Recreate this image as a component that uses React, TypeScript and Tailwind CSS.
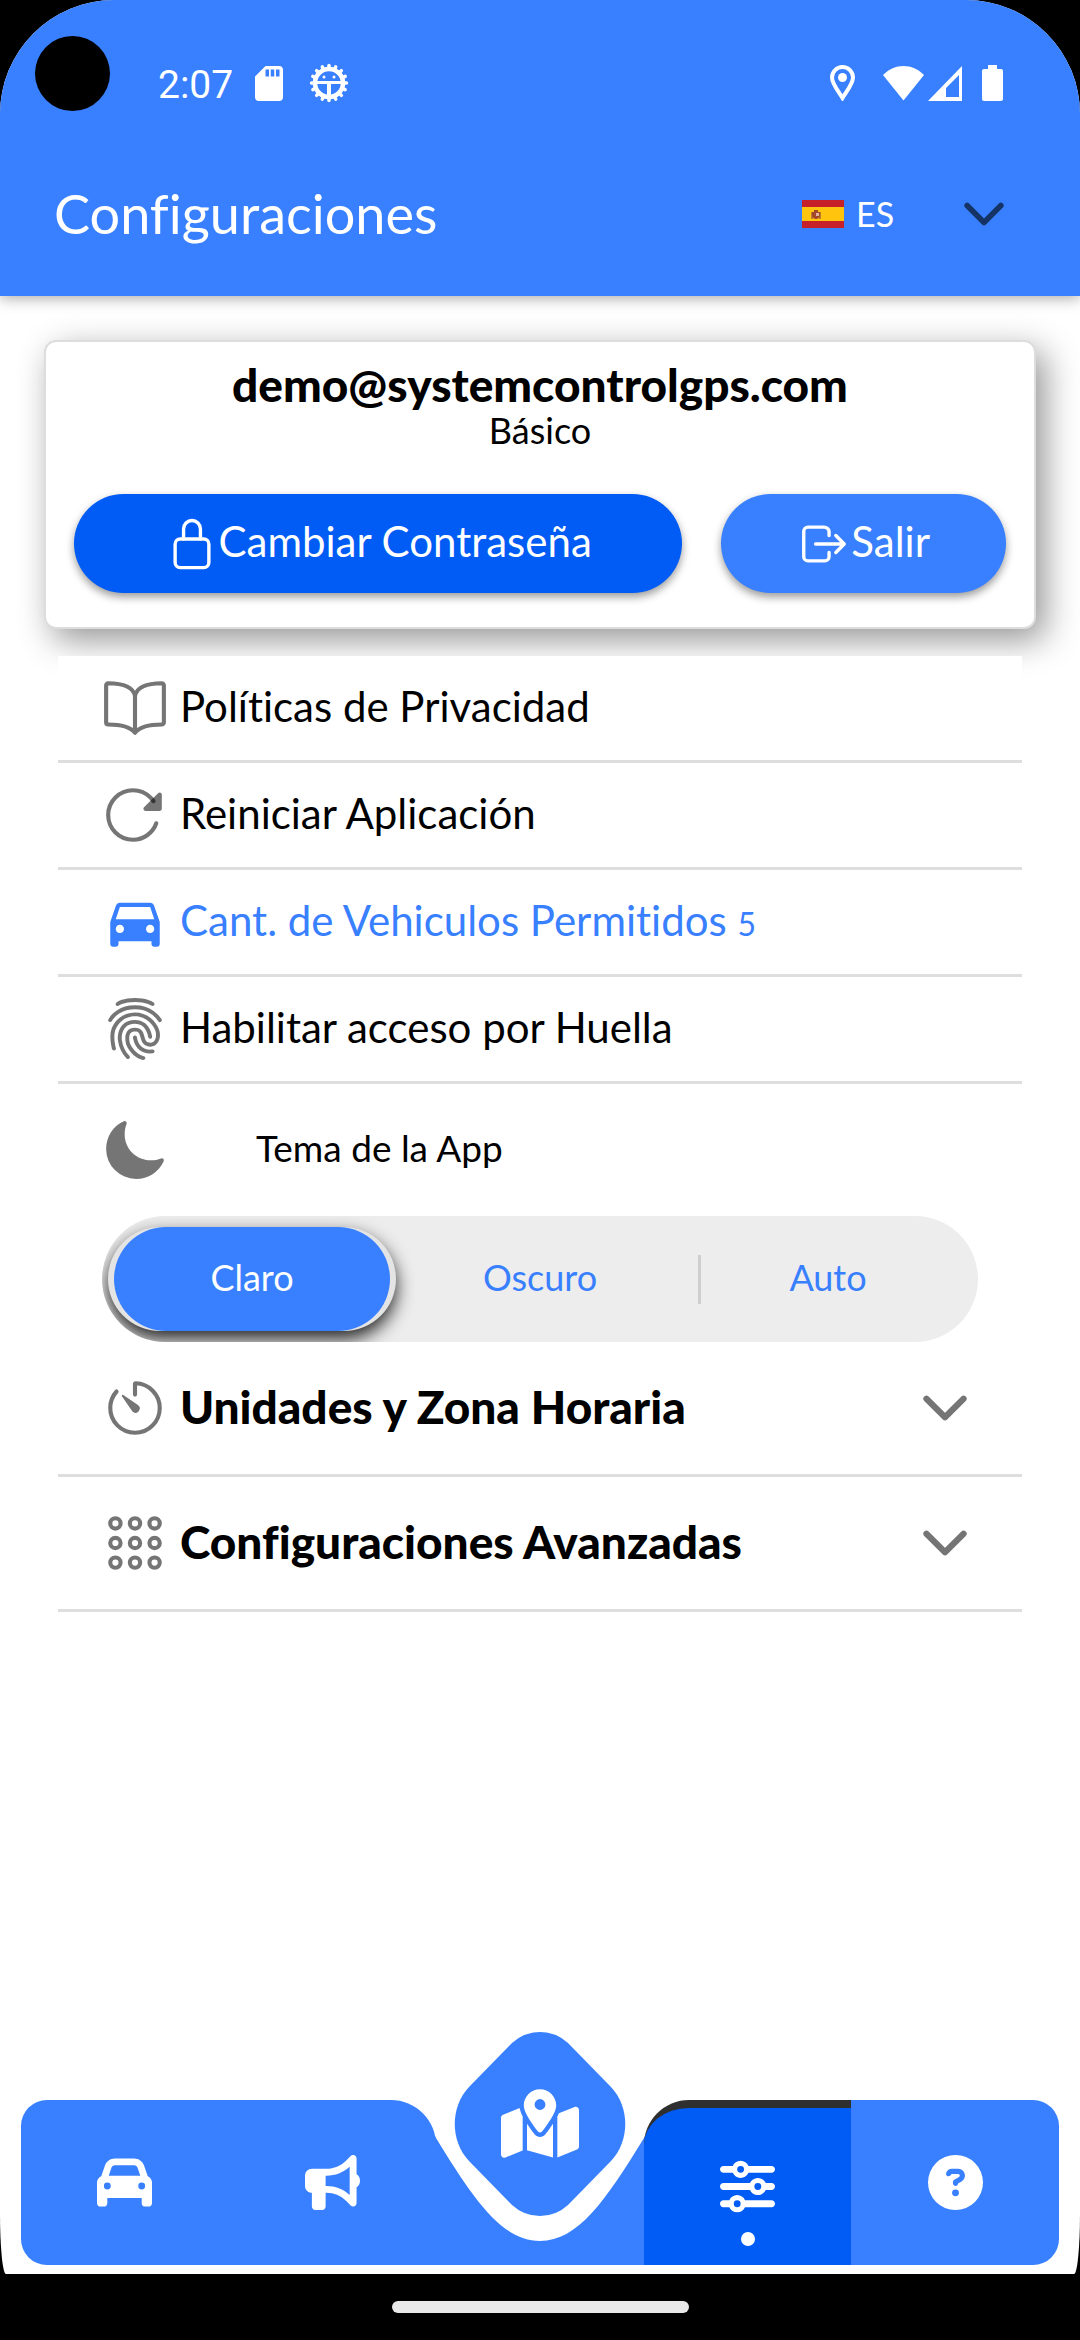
import { useState } from 'react';
import type { ReactNode } from 'react';
import {
    IoAppsOutline,
    IoBookOutline,
    IoChevronDown,
    IoFingerPrint,
    IoLockClosedOutline,
    IoLogOutOutline,
    IoMoon,
    IoReload,
    IoTimerOutline,
} from 'react-icons/io5';
import { MdDirectionsCar } from 'react-icons/md';
import { FaBullhorn, FaCar, FaCircleQuestion, FaMapLocationDot, FaSliders } from 'react-icons/fa6';

const THEMES = ['Claro', 'Oscuro', 'Auto'];

const TEETH = Array.from({ length: 16 }, (_, i) => (i * 360) / 16);

function StatusBar() {
    return (
        <div className="flex h-[166px] items-center pr-[77px] pl-[158px] text-white">
            {/* camera cutout */}
            <div className="absolute top-9 left-[35px] size-[75px] rounded-full bg-black"></div>

            <span className="pt-1 font-['Roboto',sans-serif] text-[39px] leading-none">2:07</span>
            <svg className="ml-[22px] h-[35px] w-7" viewBox="4 2 16 20" fill="currentColor">
                <path d="M18 2h-8L4 8v12c0 1.1.9 2 2 2h12c1.1 0 2-.9 2-2V4c0-1.1-.9-2-2-2zm-6 6h-2V4h2v4zm3 0h-2V4h2v4zm3 0h-2V4h2v4z" />
            </svg>
            <svg className="ml-[26px] size-10" viewBox="0 0 40 40" fill="none" stroke="currentColor">
                <circle cx="20" cy="20" r="14" strokeWidth="4.5" />
                {TEETH.map((a) => (
                    <path key={a} d="M20 5V2.500" strokeWidth="3.5" strokeLinecap="round" transform={`rotate(${a} 20 20)`} />
                ))}
                <path d="M6 19.500H34" strokeWidth="3" />
                <path d="M20 20V34" strokeWidth="4" />
                <circle cx="15" cy="14" r="1.5" fill="currentColor" stroke="none" />
                <circle cx="25" cy="14" r="1.5" fill="currentColor" stroke="none" />
            </svg>

            <div className="ml-auto flex items-center">
                <svg className="h-9 w-[25px]" viewBox="0 0 25 36" fill="none" stroke="currentColor" strokeWidth="4">
                    <path d="M12.500 33C9 27 2 19 2 12.500a10.500 10.500 0 0 1 21 0C23 19 16 27 12.500 33z" />
                    <circle cx="12.500" cy="12.500" r="4.500" fill="currentColor" stroke="none" />
                </svg>
                <svg className="ml-7 h-9 w-[41px]" viewBox="0 0 41 36" fill="currentColor">
                    <path d="M20.500 35.500 0 10C6 4 13 1 20.500 1S35 4 41 10z" />
                </svg>
                <svg className="ml-1 h-9 w-[34px]" viewBox="0 0 34 36" fill="currentColor" fillRule="evenodd">
                    <path d="M34 1V36H0zM31 10 18 23V32H31z" />
                </svg>
                <svg className="ml-5 h-9 w-[21px]" viewBox="0 0 21 36" fill="currentColor">
                    <path d="M6 0h9v4h4a2 2 0 0 1 2 2v28a2 2 0 0 1-2 2H2a2 2 0 0 1-2-2V6a2 2 0 0 1 2-2h4z" />
                </svg>
            </div>
        </div>
    );
}

function SpainFlag() {
    return (
        <svg className="h-7 w-[42px]" viewBox="0 0 42 28">
            <path fill="#c6202a" d="M0 0h42v28H0z" />
            <path fill="#ffc40d" d="M0 7h42v14H0z" />
            <path fill="#b9822a" d="M9 12h2v7H9zM17 12h2v7h-2z" />
            <path fill="#a3472a" d="M12 10h4v2h2v4q-1 3-4 3t-4-3v-4h2z" />
            <path fill="#e0b4a0" d="M14 13h3v3h-3z" />
        </svg>
    );
}

function Header() {
    return (
        <header className="z-10 bg-[#3880ff] shadow-[0_2px_14px_rgba(0,0,0,0.35)]">
            <StatusBar />
            <div className="flex h-24 items-center pr-[66px] pl-[54px] text-white">
                <h1 className="text-[54px] leading-none">Configuraciones</h1>
                <label className="ml-auto flex items-center gap-3">
                    <SpainFlag />
                    <select aria-label="Idioma" className="w-[86px] appearance-none bg-transparent text-[34px] leading-none outline-none">
                        <option>ES</option>
                    </select>
                    <IoChevronDown className="size-[60px] text-black/60" />
                </label>
            </div>
            <div className="h-[34px]"></div>
        </header>
    );
}

function AccountCard() {
    return (
        <section className="mx-11 mt-11 rounded-xl border-2 border-[#ddd] bg-white px-7 pt-[18px] pb-[34px] text-center text-black shadow-[9px_11px_34px_rgba(0,0,0,0.42)]">
            <h2 className="text-[46px] leading-[50px] font-black">demo@systemcontrolgps.com</h2>
            <p className="text-[36px] leading-10">Básico</p>
            <div className="mt-11 flex gap-[39px] text-[42px] text-white">
                <button className="flex h-[99px] flex-[609] items-center justify-center rounded-full bg-[#005cf5] shadow-[0_4px_8px_rgba(0,0,0,0.4)]">
                    <IoLockClosedOutline className="size-[54px]" />
                    <span className="pb-1">Cambiar Contraseña</span>
                </button>
                <button className="flex h-[99px] flex-[285] items-center justify-center rounded-full bg-[#3880ff] shadow-[0_4px_8px_rgba(0,0,0,0.4)]">
                    <IoLogOutOutline className="size-[54px]" />
                    <span className="pb-1">Salir</span>
                </button>
            </div>
        </section>
    );
}

interface RowProps {
    icon: ReactNode;
    children: ReactNode;
}

function Row({ icon, children }: RowProps) {
    return (
        <button className="flex h-[107px] w-full items-center gap-3 border-b-3 border-[#dedede] bg-white px-11 text-left text-[42px]">
            <span className="text-[66px] text-black/54">{icon}</span>
            <span className="pb-1">{children}</span>
        </button>
    );
}

function Expander({ icon, children }: RowProps) {
    return (
        <button className="flex h-[135px] w-full items-center gap-3 border-b-3 border-[#dedede] bg-white px-11 text-left text-[46px] font-black">
            <span className="text-[66px] text-black/54">{icon}</span>
            <span className="pb-1">{children}</span>
            <IoChevronDown className="ml-auto size-[66px] text-black/54" />
        </button>
    );
}

function ThemePicker() {
    const [theme, setTheme] = useState('Claro');

    return (
        <div role="radiogroup" aria-labelledby="theme-title">
            <div className="flex h-[132px] items-center px-11">
                <IoMoon className="size-[66px] text-black/54" />
                <p id="theme-title" className="pb-1 pl-[88px] text-[37px]">Tema de la App</p>
            </div>
            <div className="mx-11 grid h-[126px] grid-cols-3 overflow-hidden rounded-full bg-[#ededed] px-[6px] py-[11px] text-[36px]">
                {THEMES.map((t) => (
                    <label
                        key={t}
                        className={`relative flex cursor-pointer items-center justify-center rounded-full ${theme === t ? 'bg-[#e4e4e4] px-[6px] text-white shadow-[0_8px_18px_rgba(0,0,0,0.85)]' : 'text-[#3880ff]'
                            }`}
                    >
                        <input type="radio" name="theme" className="sr-only" checked={theme === t} onChange={() => setTheme(t)} />
                        {t === 'Auto' && <span className="absolute left-[14px] h-[49px] w-[3px] bg-[#cfcfcf]"></span>}
                        <span className={`flex h-full w-full items-center justify-center rounded-full pb-1 ${theme === t ? 'bg-[#3880ff]' : ''}`}>{t}</span>
                    </label>
                ))}
            </div>
        </div>
    );
}

function TabBar() {
    return (
        <nav className="mx-[21px] mt-auto mb-[9px] grid h-[165px] grid-cols-5 text-[55px] text-white">
            <button aria-label="Vehículos" className="flex items-center justify-center rounded-l-[26px] bg-[#3880ff]">
                <FaCar />
            </button>
            <button aria-label="Alertas" className="flex items-center justify-center rounded-tr-[45px] bg-[#3880ff]">
                <FaBullhorn />
            </button>
            <button aria-label="Mapa" className="relative">
                {/* floating diamond over the notch of the bar */}
                <svg className="absolute bottom-0 -left-px h-[233px] w-[210px]" viewBox="-1 0 210 233" fill="#3880ff">
                    <path d="M-1 104 0 106C38 168 66 209 104 209S170 168 208 106L209 104V233H-1z" />
                    <path d="M104 0Q88 0 76 11L33 55C14 75 14 109 33 129L76 173Q88 184 104 184T132 173L175 129C194 109 194 75 175 55L132 11Q120 0 104 0z" />
                </svg>
                <FaMapLocationDot className="absolute inset-x-0 -top-[11px] mx-auto h-[70px] w-[78px]" />
            </button>
            <button aria-label="Configuraciones" className="relative flex items-center justify-center rounded-tl-[45px] border-t-8 border-[#2f2f2f] bg-[#005cf5]">
                <FaSliders />
                <span className="absolute bottom-[19px] size-[14px] rounded-full bg-white"></span>
            </button>
            <button aria-label="Ayuda" className="flex items-center justify-center rounded-r-[26px] bg-[#3880ff]">
                <FaCircleQuestion />
            </button>
        </nav>
    );
}

export default function App() {
    return (
        <div className="flex min-h-screen flex-col bg-black font-['Lato',sans-serif] text-black [font-variant-ligatures:none]">
            <div className="relative flex flex-1 flex-col overflow-hidden rounded-t-[114px] rounded-b-[6px_60px] bg-white">
                <Header />
                <AccountCard />
                <main className="relative mx-[58px] mt-[27px] mb-24">
                    <Row icon={<IoBookOutline />}>Políticas de Privacidad</Row>
                    <Row icon={<IoReload />}>Reiniciar Aplicación</Row>
                    <Row icon={<MdDirectionsCar className="text-[#3880ff]" />}>
                        <span className="text-[#3880ff]">
                            Cant. de Vehiculos Permitidos <small className="text-[32px]">5</small>
                        </span>
                    </Row>
                    <Row icon={<IoFingerPrint />}>Habilitar acceso por Huella</Row>
                    <ThemePicker />
                    <Expander icon={<IoTimerOutline />}>Unidades y Zona Horaria</Expander>
                    <Expander icon={<IoAppsOutline />}>Configuraciones Avanzadas</Expander>
                </main>
                <TabBar />
            </div>
            <footer className="flex h-[66px] items-center justify-center">
                <div className="h-3 w-[297px] rounded-full bg-[#e9e9e9]"></div>
            </footer>
        </div>
    );
}
